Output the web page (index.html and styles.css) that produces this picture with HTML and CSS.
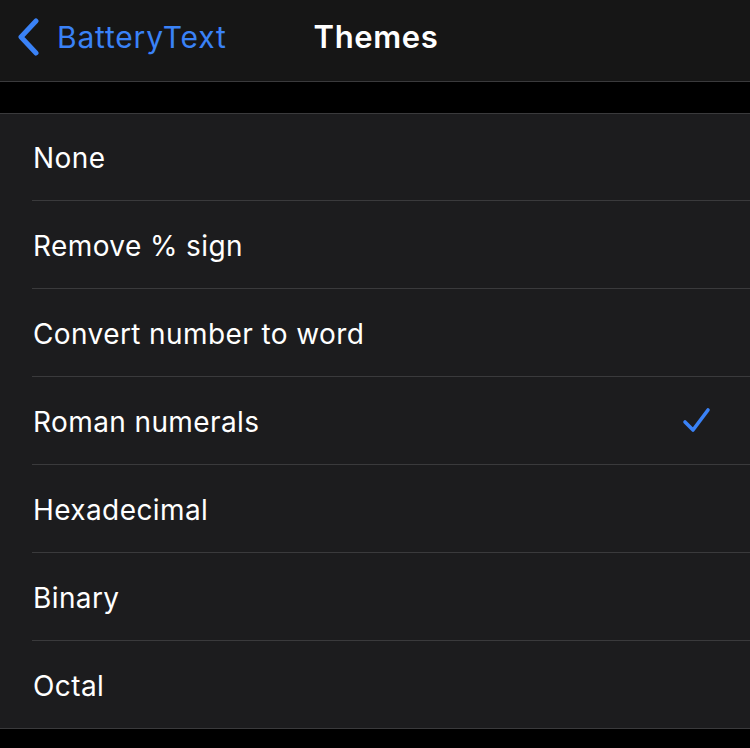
FILE: index.html
```html
<!DOCTYPE html>
<html>
<head>
<meta charset="utf-8">
<link rel="stylesheet" href="styles.css">
</head>
<body>
<header class="navbar">
  <a class="back">
    <svg class="chev" width="26" height="38" viewBox="0 0 26 38"><path d="M21 3 L6 19 L21 35" fill="none" stroke="#3a82f7" stroke-width="5" stroke-linecap="round" stroke-linejoin="round"/></svg>
    <span class="back-label">BatteryText</span>
  </a>
  <h1 class="title">Themes</h1>
</header>
<div class="gap"></div>
<ul class="list">
  <li class="row first"><span>None</span></li>
  <li class="row"><span>Remove % sign</span></li>
  <li class="row"><span>Convert number to word</span></li>
  <li class="row"><span>Roman numerals</span>
    <svg class="check" width="30" height="28" viewBox="0 0 30 28"><path d="M3 15 L11 23 L26 3" fill="none" stroke="#3a82f7" stroke-width="3.6" stroke-linecap="round" stroke-linejoin="round"/></svg>
  </li>
  <li class="row"><span>Hexadecimal</span></li>
  <li class="row"><span>Binary</span></li>
  <li class="row last"><span>Octal</span></li>
</ul>
</body>
</html>
```
FILE: styles.css
```css
html, body {
  margin: 0;
  padding: 0;
  background: #000;
  font-family: Inter, "Liberation Sans", sans-serif;
  color: #fff;
}
.navbar {
  height: 81px;
  background: #161616;
  border-bottom: 1px solid #3a3a3c;
  display: flex;
  align-items: center;
}
.back {
  display: flex;
  align-items: center;
  padding-left: 15px;
  gap: 16px;
  color: #3a82f7;
  font-size: 30px;
  margin-top: -8px;
}
.back-label {
  letter-spacing: 0.8px;
}
.title {
  margin: -8px 0 0 87px;
  font-size: 31px;
  font-weight: 600;
  letter-spacing: 0.6px;
}
.gap {
  height: 31px;
}
.list {
  list-style: none;
  margin: 0;
  padding: 0 0 0 32px;
  background: #1c1c1e;
  border-top: 1px solid #3a3a3c;
  border-bottom: 1px solid #3a3a3c;
}
.row {
  box-sizing: border-box;
  height: 88px;
  padding-top: 2px;
  display: flex;
  align-items: center;
  justify-content: space-between;
  padding-left: 1px;
  padding-right: 40px;
  border-bottom: 1px solid #3a3a3c;
  font-size: 28px;
  letter-spacing: 0.4px;
}
.row.first {
  height: 87px;
}
.row.last {
  border-bottom: none;
  height: 87px;
}
.check {
  margin-top: -2px;
  margin-right: -2px;
}
```
